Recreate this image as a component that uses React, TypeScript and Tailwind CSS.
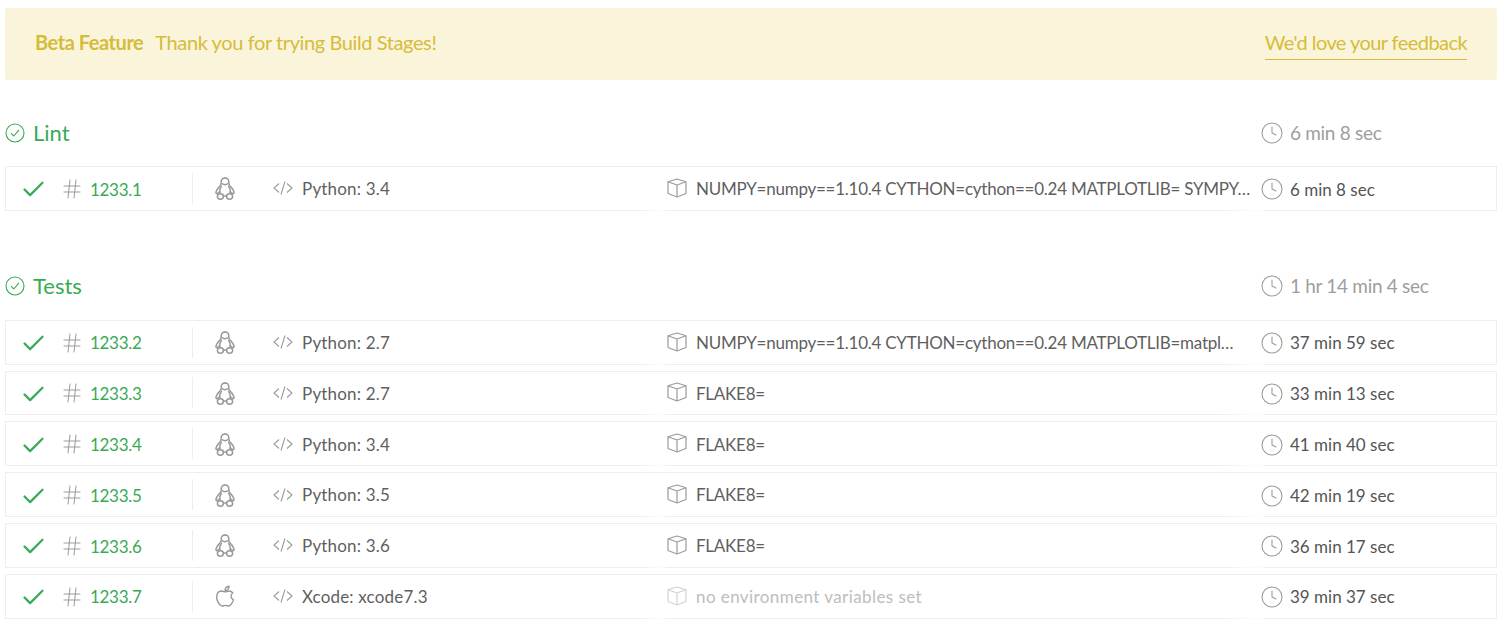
import { Check, Hash, Clock } from 'lucide-react';

function Penguin() {
  return (
    <svg width="20" height="24" viewBox="0 0 20 24" fill="none" stroke="#999999" strokeWidth="1.500" strokeLinejoin="round" strokeLinecap="round">
      <path d="M10 1c-2.600 0-3.800 1.800-3.800 4 0 1.400.1 2.300-.8 3.400C3.800 10.300 1.300 12.600 1 15.200c-.1 1.200.5 1.800 1.300 1.300l2-1.500" />
      <path d="M10 1c2.600 0 3.800 1.800 3.800 4 0 1.400-.1 2.300.8 3.400 1.600 1.900 4.100 4.200 4.400 6.800.1 1.200-.5 1.800-1.300 1.300l-2-1.500" />
      <path d="M7.500 6.800c1 1.100 4 1.100 5 0" />
      <path d="M6.400 9.400c-1.500 2-2 4.300-1.400 7M13.600 9.400c1.500 2 2 4.300 1.400 7" />
      <path d="M8.400 19h3.200" />
      <ellipse cx="5.400" cy="19.500" rx="3" ry="2.700" />
      <ellipse cx="14.600" cy="19.500" rx="3" ry="2.700" />
    </svg>
  );
}

function AppleLogo() {
  return (
    <svg width="20" height="24" viewBox="0 0 20 24" fill="none" stroke="#999999" strokeWidth="1.400" strokeLinejoin="round" strokeLinecap="round">
      <path d="M10.400 6.900c1-.1 2.200-.9 3.600-.9 1.700 0 3 .8 3.800 2-2.600 1.700-2.200 5.600.7 6.800-.8 2.200-2.400 5.300-4.300 6.100-1.200.5-2.100-.5-3.800-.5s-2.500 1-3.700.5C4 19.900 1.500 15.600 1.700 11.800 1.900 8.300 4 6.100 6.400 6c1.500 0 2.900.9 4 .9z" />
      <path d="M10.100 5.800c-.1-2.400 1.600-4.300 3.900-4.600.2 2.400-1.600 4.500-3.900 4.600z" />
    </svg>
  );
}

function CodeIcon() {
  return (
    <svg width="20" height="16" viewBox="0 0 20 16" fill="none" stroke="#9b9b9b" strokeWidth="1.100">
      <path d="M6 3.500 1 8l5 4.500M14 3.500 19 8l-5 4.500M12 1.500 8 14.500" />
    </svg>
  );
}

function Cube({ light }: { light: boolean }) {
  return (
    <svg width="20" height="20" viewBox="0 0 20 20" fill="none" stroke={light ? '#d2d2d2' : '#9b9b9b'} strokeWidth="1.200" strokeLinejoin="round" className="shrink-0">
      <path d="M10 1 19 3.800V15.500L10 19 1 15.500V3.800Z" />
      <path d="M1 3.800 10 7 19 3.800M10 7V19" />
    </svg>
  );
}

function StageCheck() {
  return (
    <svg width="20" height="20" viewBox="0 0 20 20" fill="none" stroke="#39aa56" strokeWidth="1.100" className="shrink-0">
      <circle cx="10" cy="10" r="9" />
      <path d="M6 10.200 8.800 13 14 6.800" />
    </svg>
  );
}

type RowData = { id: string; os: 'linux' | 'mac'; lang: string; env?: string; time: string };

function Row({ r }: { r: RowData }) {
  return (
    <div className="relative flex items-center h-[44.8px] pt-[2px] border border-[#eeeeee] bg-white text-[17px] text-[#5f5f5f]">
      <div className="w-[187px] flex items-center h-[31px] border-r border-[#eeeeee] shrink-0 -mt-[2px]">
        <Check size={27} strokeWidth={2} className="ml-[14px] mt-[3px] text-[#39aa56]" />
        <Hash size={24} strokeWidth={1} className="ml-[13px] mt-[1px] text-[#9b9b9b]" />
        <span className="ml-[6px] mt-[2px] text-[#39aa56] tracking-[-0.3px]">{r.id}</span>
      </div>
      <div className="w-[80px] shrink-0 flex pl-[22px]">
        {r.os === 'linux' ? <Penguin /> : <AppleLogo />}
      </div>
      <div className="w-[391px] shrink-0 flex items-center -mt-[2px]">
        <CodeIcon />
        <span className="ml-[9px] mt-[1px] tracking-[0.18px]">{r.lang}</span>
      </div>
      <div className={`flex-1 min-w-0 flex items-center -mt-[1px] ${r.env ? '' : 'text-[#bdbdbd]'}`}>
        <div className="ml-[3px] -mt-[2px]"><Cube light={!r.env} /></div>
        <span className={`ml-[9px] whitespace-nowrap ${r.env ? 'tracking-[-0.25px]' : 'tracking-[0.42px]'}`}>{r.env ?? 'no environment variables set'}</span>
      </div>
      <div className="w-[234px] shrink-0 flex items-center text-[#555555]">
        <Clock size={24} strokeWidth={1.100} className="text-[#9b9b9b] -ml-[2px]" />
        <span className="ml-[6px]">{r.time}</span>
      </div>
      <div className="absolute left-[635px] bottom-[-1px] h-[1px] w-[24px] bg-gradient-to-r from-transparent to-white" />
      <div className="absolute left-[1215px] bottom-[-1px] h-[1px] w-[42px] bg-gradient-to-l from-white to-transparent" />
    </div>
  );
}

function StageHeader({ name, time }: { name: string; time: string }) {
  return (
    <div className="flex items-center justify-between h-[40px]">
      <div className="flex items-center text-[#39aa56] text-[22px]">
        <StageCheck />
        <span className="ml-[8px] -mt-[1px]">{name}</span>
      </div>
      <div className="w-[235px] flex items-center text-[#9e9e9e] text-[19px] tracking-[-0.3px]">
        <Clock size={24} strokeWidth={1.100} className="-ml-[2px]" />
        <span className="ml-[6px]">{time}</span>
      </div>
    </div>
  );
}

const lint: RowData[] = [
  { id: '1233.1', os: 'linux', lang: 'Python: 3.4', env: 'NUMPY=numpy==1.10.4 CYTHON=cython==0.24 MATPLOTLIB= SYMPY…', time: '6 min 8 sec' },
];

const tests: RowData[] = [
  { id: '1233.2', os: 'linux', lang: 'Python: 2.7', env: 'NUMPY=numpy==1.10.4 CYTHON=cython==0.24 MATPLOTLIB=matpl…', time: '37 min 59 sec' },
  { id: '1233.3', os: 'linux', lang: 'Python: 2.7', env: 'FLAKE8=', time: '33 min 13 sec' },
  { id: '1233.4', os: 'linux', lang: 'Python: 3.4', env: 'FLAKE8=', time: '41 min 40 sec' },
  { id: '1233.5', os: 'linux', lang: 'Python: 3.5', env: 'FLAKE8=', time: '42 min 19 sec' },
  { id: '1233.6', os: 'linux', lang: 'Python: 3.6', env: 'FLAKE8=', time: '36 min 17 sec' },
  { id: '1233.7', os: 'mac', lang: 'Xcode: xcode7.3', time: '39 min 37 sec' },
];

export default function App() {
  return (
    <div className="h-[628px] overflow-hidden bg-white pt-[8px] pl-[5px] pr-[11px] font-['Lato','Open_Sans',sans-serif]">
      <div className="flex items-center justify-between h-[72px] rounded-[2px] bg-[#faf5da] px-[30px] text-[#d6bc3a] text-[20px]">
        <div className="-mt-[4px]">
          <span className="font-bold tracking-[-0.45px]">Beta Feature</span>
          <span className="ml-[12px] tracking-[-0.4px]">Thank you for trying Build Stages!</span>
        </div>
        <span className="-mt-[2px] border-b border-[#d6bc3a] pb-[2px] tracking-[-0.56px]">We'd love your feedback</span>
      </div>
      <div className="mt-[33px]">
        <StageHeader name="Lint" time="6 min 8 sec" />
      </div>
      <div className="mt-[13px]">
        {lint.map((r) => <Row key={r.id} r={r} />)}
      </div>
      <div className="mt-[55px]">
        <StageHeader name="Tests" time="1 hr 14 min 4 sec" />
      </div>
      <div className="mt-[14px] flex flex-col gap-[6px]">
        {tests.map((r) => <Row key={r.id} r={r} />)}
      </div>
    </div>
  );
}
